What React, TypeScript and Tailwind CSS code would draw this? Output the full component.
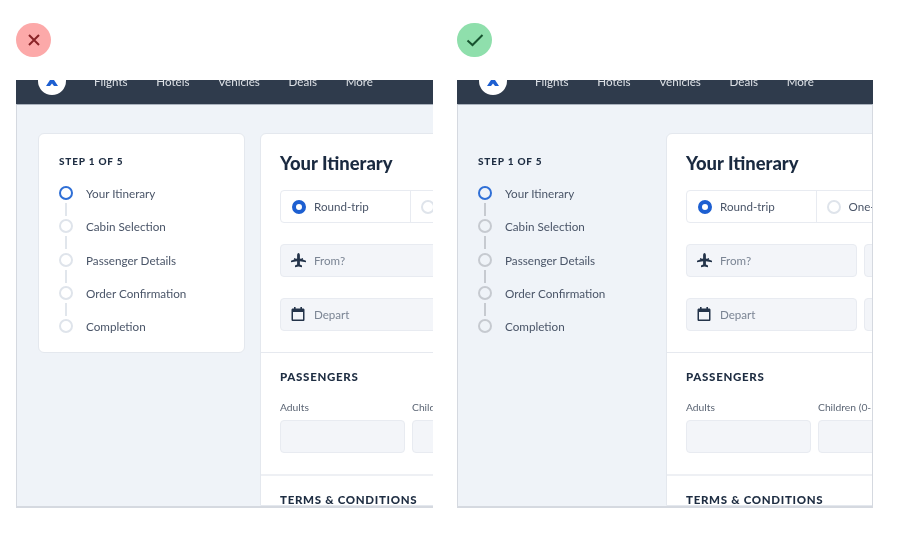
const navItems = ["Flights", "Hotels", "Vehicles", "Deals", "More"];
const steps = ["Your Itinerary", "Cabin Selection", "Passenger Details", "Order Confirmation", "Completion"];

function Logo() {
  return (
    <div className="flex h-[28px] w-[28px] shrink-0 items-center justify-center rounded-full bg-white">
      <svg width="14" height="14" viewBox="0 0 14 14">
        <path d="M7 0 L9 6 L13 12 L9 12 L7 9.5 L5 12 L1 12 L5 6 Z" fill="#1d5fd1" />
      </svg>
    </div>
  );
}

function PlaneIcon() {
  return (
    <svg width="15" height="15" viewBox="0 0 15 15" className="shrink-0">
      <path
        d="M7.5 0 C8.3 0 8.9 1.2 8.9 2.6 V5.4 L10.6 6 V5 H11.8 V6.5 L15 7.7 V9.3 L8.9 8.3 V11.4 L11 12.6 V14.2 L7.5 13.6 L4 14.2 V12.6 L6.1 11.4 V8.3 L0 9.3 V7.7 L3.2 6.5 V5 H4.4 V6 L6.1 5.4 V2.6 C6.1 1.2 6.7 0 7.5 0 Z"
        fill="#24344a"
      />
    </svg>
  );
}

function CalendarIcon() {
  return (
    <svg width="15" height="15" viewBox="0 0 15 15" className="shrink-0">
      <path
        d="M3 0 H4.6 V1.5 H9.4 V0 H11 V1.5 H12 C13 1.5 13.5 2 13.5 3 V12.5 C13.5 13.5 13 14 12 14 H2 C1 14 0.5 13.5 0.5 12.5 V3 C0.5 2 1 1.5 2 1.5 H3 Z M2 5 V12.5 H12 V5 Z"
        fill="#24344a"
      />
    </svg>
  );
}

function Stepper({ muted }: { muted: boolean }) {
  const dotClass = muted ? "border-[#c6cad0]" : "border-[#dfe4eb]";
  const lineClass = muted ? "bg-[#c6cad0]" : "bg-[#e1e6ec]";
  return (
    <div className="mt-[19px] flex flex-col">
      {steps.map((step, i) => (
        <div key={step} className="flex flex-col">
          <div className="flex h-[14px] items-center gap-[13px]">
            <div className={`h-[14px] w-[14px] shrink-0 rounded-full border-2 ${i === 0 ? "border-[#2f6fd6]" : dotClass}`} />
            <span className="text-[11.7px] leading-[14px] whitespace-nowrap text-[#4a5568]">{step}</span>
          </div>
          {i < steps.length - 1 && (
            <div className="flex h-[19.3px] items-center pl-[6px]">
              <div className={`h-[13px] w-[2px] ${lineClass}`} />
            </div>
          )}
        </div>
      ))}
    </div>
  );
}

function Field({ icon, label }: { icon: React.ReactNode; label: string }) {
  return (
    <div className="flex h-[33px] w-[171px] shrink-0 items-center gap-[8px] rounded-[4px] border border-[#e8ebf1] bg-[#f3f5f9] pl-[10px]">
      {icon}
      <span className="text-[11.6px] text-[#7b8594]">{label}</span>
    </div>
  );
}

function SectionTitle({ children }: { children: React.ReactNode }) {
  return <h2 className="text-[11.5px] leading-[14px] font-black tracking-[0.06em] whitespace-nowrap text-[#1e2d42]">{children}</h2>;
}

function Itinerary() {
  return (
    <main className="flex shrink-0 flex-col rounded-tl-[6px] border border-[#e4e8ee] bg-white">
      <div className="border-b border-[#e6e9ef] px-[19px] pt-[18px] pb-[21px]">
        <h1 className="text-[18.4px] leading-[22px] font-black whitespace-nowrap text-[#1a2a40]">Your Itinerary</h1>
        <div className="mt-[16px] flex h-[33px] w-max rounded-[4px] border border-[#e8ebf1]">
          <div className="flex w-[129.5px] items-center gap-[8px] border-r border-[#e8ebf1] pl-[11px]">
            <div className="h-[14px] w-[14px] rounded-full border-[4px] border-[#1d5fd1] bg-white" />
            <span className="text-[11.6px] text-[#4a5568]">Round-trip</span>
          </div>
          <div className="flex w-[129px] items-center gap-[8px] pl-[10px]">
            <div className="h-[14px] w-[14px] rounded-full border-2 border-[#dfe4eb] bg-white" />
            <span className="text-[11.6px] text-[#4a5568]">One-way</span>
          </div>
        </div>
        <div className="mt-[21px] flex gap-[7px]">
          <Field icon={<PlaneIcon />} label="From?" />
          <Field icon={<PlaneIcon />} label="To?" />
        </div>
        <div className="mt-[21px] flex gap-[7px]">
          <Field icon={<CalendarIcon />} label="Depart" />
          <Field icon={<CalendarIcon />} label="Return" />
        </div>
      </div>
      <div className="border-b-2 border-[#eef0f4] px-[19px] pt-[17px] pb-[21px]">
        <SectionTitle>PASSENGERS</SectionTitle>
        <div className="mt-[17px] flex gap-[7px]">
          {["Adults", "Children (0-17)", "Infants"].map((label) => (
            <div key={label} className="flex w-[125px] shrink-0 flex-col gap-[6px]">
              <label className="text-[10.3px] leading-[13px] whitespace-nowrap text-[#5c6675]">{label}</label>
              <div className="h-[33px] rounded-[4px] border border-[#e8ebf1] bg-[#f3f5f9]" />
            </div>
          ))}
        </div>
      </div>
      <div className="px-[19px] pt-[17px] pb-[20px]">
        <SectionTitle>TERMS &amp; CONDITIONS</SectionTitle>
      </div>
    </main>
  );
}

function StepHeading() {
  return <div className="text-[10px] leading-[12px] font-black tracking-[0.08em] text-[#1e2d42]">STEP 1 OF 5</div>;
}

function Frame({ good }: { good: boolean }) {
  return (
    <div className={`flex h-[428px] shrink-0 flex-col overflow-hidden border-b-2 border-[#d5d9e0] ${good ? "w-[416px]" : "w-[417px]"}`}>
      <header className="flex h-[24px] shrink-0 bg-[#2f3b4c]">
        <div className="-mt-[13px] ml-[22px] flex items-start">
          <Logo />
          <nav className="ml-[28px] flex gap-[28.7px] pt-[6px]">
            {navItems.map((item) => (
              <span key={item} className="text-[11.6px] text-[#dde1e6]">{item}</span>
            ))}
          </nav>
        </div>
      </header>
      <div className={`flex flex-1 overflow-hidden border-t border-l border-t-[#aab2bd] border-l-[#d5d9e0] bg-[#eff3f8] pt-[28px] ${good ? "border-r border-r-[#d5d9e0]" : "gap-[15px]"}`}>
        {good ? (
          <aside className="ml-[20px] w-[188px] shrink-0 pt-[22px]">
            <StepHeading />
            <Stepper muted />
          </aside>
        ) : (
          <aside className="ml-[21px] h-[220px] w-[207px] shrink-0 rounded-[6px] border border-[#e4e8ee] bg-white pt-[21px] pl-[20px]">
            <StepHeading />
            <Stepper muted={false} />
          </aside>
        )}
        <Itinerary />
      </div>
    </div>
  );
}

export default function App() {
  return (
    <div className="h-[539px] w-[902px] overflow-hidden bg-white font-['Lato',sans-serif] blur-[0.4px]">
      <div className="flex gap-[24px] pt-[23px] pl-[16px]">
        <div className="flex w-[417px] flex-col gap-[23px]">
          <div className="flex h-[34px] w-[35px] items-center justify-center rounded-full bg-[#fca9a9]">
            <svg width="14" height="14" viewBox="0 0 14 14"><path d="M2 2 L12 12 M12 2 L2 12" stroke="#8a2327" strokeWidth="2" /></svg>
          </div>
          <Frame good={false} />
        </div>
        <div className="flex w-[417px] flex-col gap-[23px]">
          <div className="flex h-[34px] w-[35px] items-center justify-center rounded-full bg-[#8fdfac]">
            <svg width="18" height="14" viewBox="0 0 18 14"><path d="M1.5 7.5 L6.5 12 L16.5 2" fill="none" stroke="#17532f" strokeWidth="2" /></svg>
          </div>
          <Frame good />
        </div>
      </div>
    </div>
  );
}
